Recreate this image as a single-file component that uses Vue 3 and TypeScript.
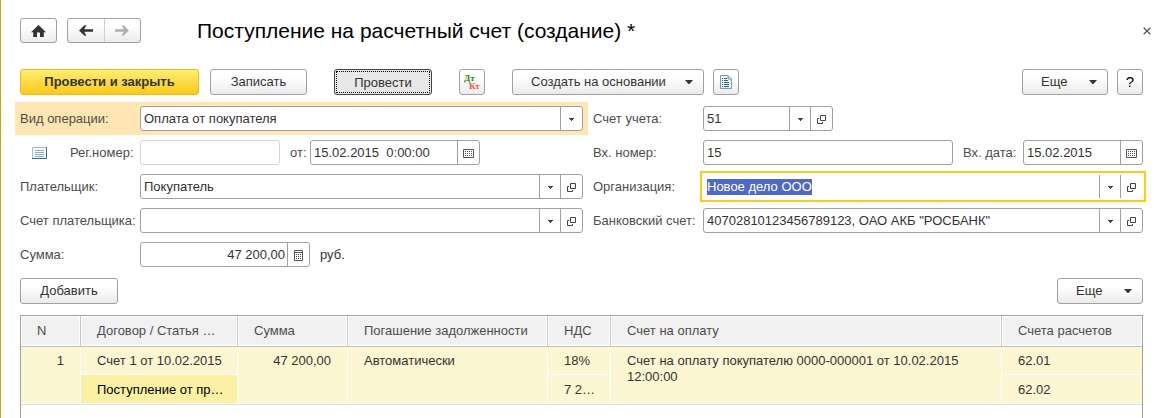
<script setup lang="ts">
import { onMounted, ref } from 'vue'

interface Line {
  n: number
  contract: string
  article: string
  sum: string
  repayment: string
  vat: string
  vatSum: string
  invoice: string
  account: string
  advanceAccount: string
}

const operation = ref('Оплата от покупателя')
const account = ref('51')
const regNumber = ref('')
const regDate = ref('15.02.2015  0:00:00')
const inNumber = ref('15')
const inDate = ref('15.02.2015')
const payer = ref('Покупатель')
const organization = ref('Новое дело ООО')
const payerAccount = ref('')
const bankAccount = ref('40702810123456789123, ОАО АКБ "РОСБАНК"')
const amount = ref('47 200,00')

const lines: Line[] = [
  {
    n: 1,
    contract: 'Счет 1 от 10.02.2015',
    article: 'Поступление от пр…',
    sum: '47 200,00',
    repayment: 'Автоматически',
    vat: '18%',
    vatSum: '7 2…',
    invoice: 'Счет на оплату покупателю 0000-000001 от 10.02.2015 12:00:00',
    account: '62.01',
    advanceAccount: '62.02',
  },
]

const organizationInput = ref<HTMLInputElement | null>(null)

onMounted(() => {
  organizationInput.value?.focus()
  organizationInput.value?.select()
})
</script>

<template>
  <svg class="sprite" aria-hidden="true">
    <symbol id="i-caret" viewBox="0 0 5 3"><path d="M0 0h5v1H4v1H3v1H2V2H1V1H0z" fill="#444" /></symbol>
    <symbol id="i-down" viewBox="0 0 8 4"><path d="M0 0h8L4.5 4h-1z" fill="#333" /></symbol>
    <symbol id="i-open" viewBox="0 0 9 9">
      <path d="M3.500 .5h5v5h-5zM2 3.500H.5v5h5V7" fill="none" stroke="#444" />
    </symbol>
    <symbol id="i-calendar" viewBox="0 0 11 9">
      <path d="M.5 .5h10v8H.5z" fill="none" stroke="#555" />
      <path d="M2 2.500h7M2 4.500h7M2 6.500h7" fill="none" stroke="#555" stroke-dasharray="1 1" />
    </symbol>
    <symbol id="i-calc" viewBox="0 0 9 11">
      <path d="M.5 .5h8v10h-8zM.5 2.500h8" fill="none" stroke="#555" />
      <path d="M2 4.500h5M2 6.500h5M2 8.500h5" fill="none" stroke="#444" stroke-dasharray="1 1" />
    </symbol>
    <symbol id="i-arrow" viewBox="0 0 14 11">
      <path d="M0 5.500L5.500 .300H7.300L5.300 4.300H14V6.700H5.300L7.300 10.700H5.500z" fill="currentColor" />
    </symbol>
  </svg>

  <main class="window">
    <header class="head">
      <button type="button" class="btn home" aria-label="Начальная страница">
        <svg width="15" height="12" viewBox="0 0 15 12">
          <path d="M7.500 0L15 7.200H12.800V12H9V7.500H6V12H2.200V7.200H0z" fill="#333" />
        </svg>
      </button>
      <div class="history">
        <button type="button" aria-label="Назад"><svg width="14" height="11"><use href="#i-arrow" /></svg></button>
        <button type="button" aria-label="Вперед" disabled>
          <svg class="flip" width="14" height="11"><use href="#i-arrow" /></svg>
        </button>
      </div>
      <h1>Поступление на расчетный счет (создание) *</h1>
      <button type="button" class="close" aria-label="Закрыть">
        <svg width="8" height="8" viewBox="0 0 8 8"><path d="M.7 .7L7.300 7.300M7.300 .7L.7 7.300" stroke="#555" stroke-width="1.300" /></svg>
      </button>
    </header>

    <div class="toolbar">
      <button type="button" class="btn primary">Провести и закрыть</button>
      <button type="button" class="btn save">Записать</button>
      <button type="button" class="btn post">Провести</button>
      <button type="button" class="btn square ledger" aria-label="Дт Кт">
        <svg width="18" height="18" viewBox="0 0 18 18" aria-hidden="true">
          <text x="1" y="8" fill="#2a8000">Дт</text>
          <text x="6" y="16" fill="#ff4a40">Кт</text>
        </svg>
      </button>
      <button type="button" class="btn menu create" aria-haspopup="menu">
        Создать на основании <svg width="8" height="4"><use href="#i-down" /></svg>
      </button>
      <button type="button" class="btn square" aria-label="Отчет">
        <svg width="12" height="14" viewBox="0 0 12 14">
          <path d="M.5 .5H8L11.500 4V13.500H.5z" fill="#e9f4fb" stroke="#7d9bb3" />
          <path d="M8 .5V4H11.500" fill="#b9d4e6" stroke="#7d9bb3" />
          <path d="M2 3.500h1M4 3.500h3M2 5.500h1M4 5.500h4M2 7.500h1M4 7.500h5M2 9.500h1M4 9.500h5M2 11.500h1M4 11.500h5" stroke="#37617f" />
        </svg>
      </button>
      <button type="button" class="btn menu more push" aria-haspopup="menu">
        Еще <svg width="8" height="4"><use href="#i-down" /></svg>
      </button>
      <button type="button" class="btn square help" aria-label="Справка">?</button>
    </div>

    <form class="form" @submit.prevent>
      <div class="row marked">
        <label class="name" for="operation">Вид операции:</label>
        <div class="field choice grow">
          <select id="operation" v-model="operation"><option>Оплата от покупателя</option></select>
          <span class="cell"><svg width="5" height="3"><use href="#i-caret" /></svg></span>
        </div>
      </div>
      <div class="row">
        <label class="name" for="account">Счет учета:</label>
        <div class="field w-account">
          <input id="account" v-model="account" type="text" />
          <button type="button" class="cell" aria-label="Выбрать счет учета"><svg width="5" height="3"><use href="#i-caret" /></svg></button>
          <button type="button" class="cell" aria-label="Открыть счет учета"><svg width="9" height="9"><use href="#i-open" /></svg></button>
        </div>
      </div>

      <div class="row">
        <div class="name reg">
          <svg width="15" height="12" viewBox="0 0 15 12">
            <path d="M.5 .5h14v11H.5z" fill="#f4f9fc" stroke="#a9bccb" />
            <path d="M14.500 0V11.500H0" fill="none" stroke="#3d6a83" />
            <path d="M3 3.500h9M3 5.500h9M3 7.500h9M3 9.500h9" stroke="#8fb0c4" />
          </svg>
          <label for="reg-number">Рег.номер:</label>
        </div>
        <div class="field pale w-reg"><input id="reg-number" v-model="regNumber" type="text" readonly /></div>
        <label class="from" for="reg-date">от:</label>
        <div class="field w-medium">
          <input id="reg-date" v-model="regDate" type="text" />
          <button type="button" class="cell" aria-label="Выбрать дату"><svg width="11" height="9"><use href="#i-calendar" /></svg></button>
        </div>
      </div>
      <div class="row">
        <label class="name" for="in-number">Вх. номер:</label>
        <div class="field grow"><input id="in-number" v-model="inNumber" type="text" /></div>
        <label class="in-date" for="in-date">Вх. дата:</label>
        <div class="field w-date">
          <input id="in-date" v-model="inDate" type="text" />
          <button type="button" class="cell" aria-label="Выбрать входящую дату"><svg width="11" height="9"><use href="#i-calendar" /></svg></button>
        </div>
      </div>

      <div class="row">
        <label class="name" for="payer">Плательщик:</label>
        <div class="field grow">
          <input id="payer" v-model="payer" type="text" />
          <button type="button" class="cell" aria-label="Выбрать плательщика"><svg width="5" height="3"><use href="#i-caret" /></svg></button>
          <button type="button" class="cell" aria-label="Открыть плательщика"><svg width="9" height="9"><use href="#i-open" /></svg></button>
        </div>
      </div>
      <div class="row">
        <label class="name" for="organization">Организация:</label>
        <div class="field grow">
          <input id="organization" ref="organizationInput" v-model="organization" type="text" />
          <button type="button" class="cell" aria-label="Выбрать организацию"><svg width="5" height="3"><use href="#i-caret" /></svg></button>
          <button type="button" class="cell" aria-label="Открыть организацию"><svg width="9" height="9"><use href="#i-open" /></svg></button>
        </div>
      </div>

      <div class="row">
        <label class="name" for="payer-account">Счет плательщика:</label>
        <div class="field grow">
          <input id="payer-account" v-model="payerAccount" type="text" />
          <button type="button" class="cell" aria-label="Выбрать счет плательщика"><svg width="5" height="3"><use href="#i-caret" /></svg></button>
          <button type="button" class="cell" aria-label="Открыть счет плательщика"><svg width="9" height="9"><use href="#i-open" /></svg></button>
        </div>
      </div>
      <div class="row">
        <label class="name" for="bank-account">Банковский счет:</label>
        <div class="field grow">
          <input id="bank-account" v-model="bankAccount" type="text" />
          <button type="button" class="cell" aria-label="Выбрать банковский счет"><svg width="5" height="3"><use href="#i-caret" /></svg></button>
          <button type="button" class="cell" aria-label="Открыть банковский счет"><svg width="9" height="9"><use href="#i-open" /></svg></button>
        </div>
      </div>

      <div class="row">
        <label class="name" for="amount">Сумма:</label>
        <div class="field w-medium">
          <input id="amount" v-model="amount" class="number" type="text" />
          <button type="button" class="cell" aria-label="Калькулятор"><svg width="9" height="11"><use href="#i-calc" /></svg></button>
        </div>
        <span class="unit">руб.</span>
      </div>
    </form>

    <div class="toolbar lines-bar">
      <button type="button" class="btn add">Добавить</button>
      <button type="button" class="btn menu more push" aria-haspopup="menu">
        Еще <svg width="8" height="4"><use href="#i-down" /></svg>
      </button>
    </div>

    <div class="lines">
      <table>
        <colgroup>
          <col class="c-n" /><col class="c-contract" /><col class="c-sum" /><col class="c-repay" />
          <col class="c-vat" /><col /><col class="c-account" />
        </colgroup>
        <thead>
          <tr>
            <th>N</th>
            <th>Договор / Статья …</th>
            <th>Сумма</th>
            <th>Погашение задолженности</th>
            <th>НДС</th>
            <th>Счет на оплату</th>
            <th>Счета расчетов</th>
          </tr>
        </thead>
        <tbody v-for="line in lines" :key="line.n">
          <tr>
            <td rowspan="2" class="right">{{ line.n }}</td>
            <td>{{ line.contract }}</td>
            <td rowspan="2" class="right">{{ line.sum }}</td>
            <td rowspan="2">{{ line.repayment }}</td>
            <td>{{ line.vat }}</td>
            <td rowspan="2" class="wrap">{{ line.invoice }}</td>
            <td>{{ line.account }}</td>
          </tr>
          <tr>
            <td class="current">{{ line.article }}</td>
            <td>{{ line.vatSum }}</td>
            <td>{{ line.advanceAccount }}</td>
          </tr>
        </tbody>
      </table>
    </div>
  </main>
</template>

<style>
body {
  margin: 0;
  background: #fff;
}
</style>

<style scoped>
.sprite {
  display: none;
}

.window {
  box-sizing: border-box;
  min-height: 100vh;
  display: flex;
  flex-direction: column;
  padding: 18px 11px 0 19px;
  border-left: 1px solid #c4a21a;
  color: #333;
  font: 13px/16px "Liberation Sans", Arial, sans-serif;
}

button,
input,
select {
  box-sizing: border-box;
  margin: 0;
  font: inherit;
  color: inherit;
}

svg {
  display: block;
  flex: none;
}

.head {
  display: flex;
  align-items: center;
  margin-right: -8px;
}

.btn {
  display: flex;
  align-items: center;
  justify-content: center;
  height: 26px;
  padding: 0;
  border: 1px solid #a0a0a0;
  border-radius: 3px;
  background: linear-gradient(#fff 30%, #ebebeb);
  white-space: nowrap;
}

.home {
  width: 37px;
  height: 25px;
}

.history {
  box-sizing: border-box;
  display: flex;
  width: 74px;
  height: 25px;
  margin-left: 10px;
  border: 1px solid #a0a0a0;
  border-radius: 3px;
  background: linear-gradient(#fff 30%, #ebebeb);
}

.history button {
  display: flex;
  flex: 1;
  align-items: center;
  justify-content: center;
  padding: 0;
  border: 0;
  background: none;
}

.history button + button {
  border-left: 1px solid #d0d0d0;
  color: #b0b0b0;
}

.flip {
  transform: scaleX(-1);
}

h1 {
  flex: 1;
  margin: 0 0 0 56px;
  color: #000;
  font-size: 21px;
  font-weight: 400;
  line-height: 25px;
}

.close {
  padding: 0;
  border: 0;
  background: none;
}

.toolbar {
  display: flex;
  margin-top: 26px;
}

.primary {
  width: 179px;
  border-color: #f3b91c;
  background: linear-gradient(#ffee70, #fac91c);
  font-weight: 700;
}

.save {
  width: 97px;
  margin-left: 11px;
}

.post {
  width: 98px;
  margin: 0 27px;
  padding-top: 2px;
  border-color: #444;
  background: #e8e8e8;
  outline: 1px dotted #000;
  outline-offset: -3px;
}

.square {
  width: 26px;
}

.ledger text {
  font: 700 9px "Liberation Serif", serif;
}

.menu {
  justify-content: space-between;
  padding: 0 10px 0 18px;
}

.create {
  width: 192px;
  margin: 0 9px 0 27px;
}

.more {
  width: 86px;
}

.push {
  margin-left: auto;
}

.help {
  margin-left: 9px;
  color: #000;
  font-size: 15px;
}

.form {
  display: grid;
  grid-template-columns: 563fr 550fr;
  gap: 9px 10px;
  margin-top: 11px;
}

.row {
  display: flex;
  align-items: center;
  min-width: 0;
}

.marked {
  background: #ffe6b3;
  box-shadow: 0 0 0 4px #ffe6b3, -1px 0 0 4px #ffe6b3, 1px 0 0 4px #ffe6b3;
}

.name {
  flex: none;
  width: 120px;
  color: #4d4d4d;
  white-space: nowrap;
}

.form .row:nth-child(even) .name {
  width: 110px;
}

.reg {
  box-sizing: border-box;
  display: flex;
  align-items: center;
  gap: 23px;
  padding-left: 12px;
}

.from {
  width: 20px;
  margin-left: 10px;
  color: #4d4d4d;
}

.in-date {
  width: 60px;
  margin-left: 10px;
  color: #4d4d4d;
  white-space: nowrap;
}

.unit {
  margin-left: 10px;
}

.field {
  box-sizing: border-box;
  display: flex;
  height: 25px;
  border: 1px solid #a0a0a0;
  border-radius: 3px;
  background: #fff;
}

.field:focus-within {
  border-color: #fff;
  outline: 2px solid #fbcb1e;
  outline-offset: 1px;
  border-radius: 0;
}

.pale {
  border-color: #d6d6d6;
}

.grow {
  flex: 1;
  min-width: 0;
}

.w-account {
  width: 130px;
}

.w-reg {
  width: 140px;
}

.w-medium {
  width: 170px;
}

.w-date {
  width: 120px;
}

.field input,
.field select {
  flex: 1;
  width: 0;
  min-width: 0;
  padding: 0 3px;
  border: 0;
  outline: 0;
  background: none;
  appearance: none;
  white-space: pre;
}

.field input::selection {
  background: #5069c4;
  color: #fff;
}

.field .number {
  padding-right: 2px;
  text-align: right;
}

.cell {
  box-sizing: border-box;
  display: flex;
  flex: none;
  align-items: center;
  justify-content: center;
  width: 21px;
  padding: 1px 0 0;
  border: 0;
  border-left: 1px solid #a0a0a0;
  background: none;
}

.cell:last-child {
  width: 22px;
}

.choice {
  display: grid;
  grid-template-columns: 1fr 22px;
}

.choice select {
  grid-area: 1 / 1 / 2 / 3;
  width: 100%;
}

.choice .cell {
  grid-area: 1 / 2;
  pointer-events: none;
}

.lines-bar {
  margin-top: 11px;
}

.add {
  width: 98px;
}

.lines {
  flex: 1;
  margin-top: 11px;
  border: 1px solid #a0a0a0;
  border-bottom: 0;
}

table {
  width: 100%;
  table-layout: fixed;
  border-collapse: separate;
  border-spacing: 0;
  border-bottom: 1px solid #dedede;
}

.c-n {
  width: 60px;
}

.c-contract {
  width: 157px;
}

.c-sum {
  width: 110px;
}

.c-repay {
  width: 200px;
}

.c-vat {
  width: 63px;
}

.c-account {
  width: 140px;
}

th {
  box-sizing: border-box;
  height: 31px;
  padding: 0 0 0 16px;
  border-right: 1px solid #c8c8c8;
  border-bottom: 1px solid #c0c0c0;
  background: #f1f1f1;
  box-shadow: inset 0 0 0 1px #fff;
  color: #4d4d4d;
  font-weight: 400;
  text-align: left;
  white-space: nowrap;
}

td {
  box-sizing: border-box;
  height: 28px;
  padding: 6px 0 5px 16px;
  border-right: 1px solid #fff;
  border-bottom: 1px solid #fff;
  background: #fdf6d2;
  vertical-align: top;
  white-space: nowrap;
}

tr + tr td {
  height: 29px;
  padding-top: 7px;
}

th:last-child,
tr td:last-child {
  border-right: 0;
}

td.right {
  padding-right: 16px;
  text-align: right;
}

td.wrap {
  padding-right: 32px;
  white-space: normal;
}

td.current {
  background: #fcf0a4;
  color: #000;
}
</style>
